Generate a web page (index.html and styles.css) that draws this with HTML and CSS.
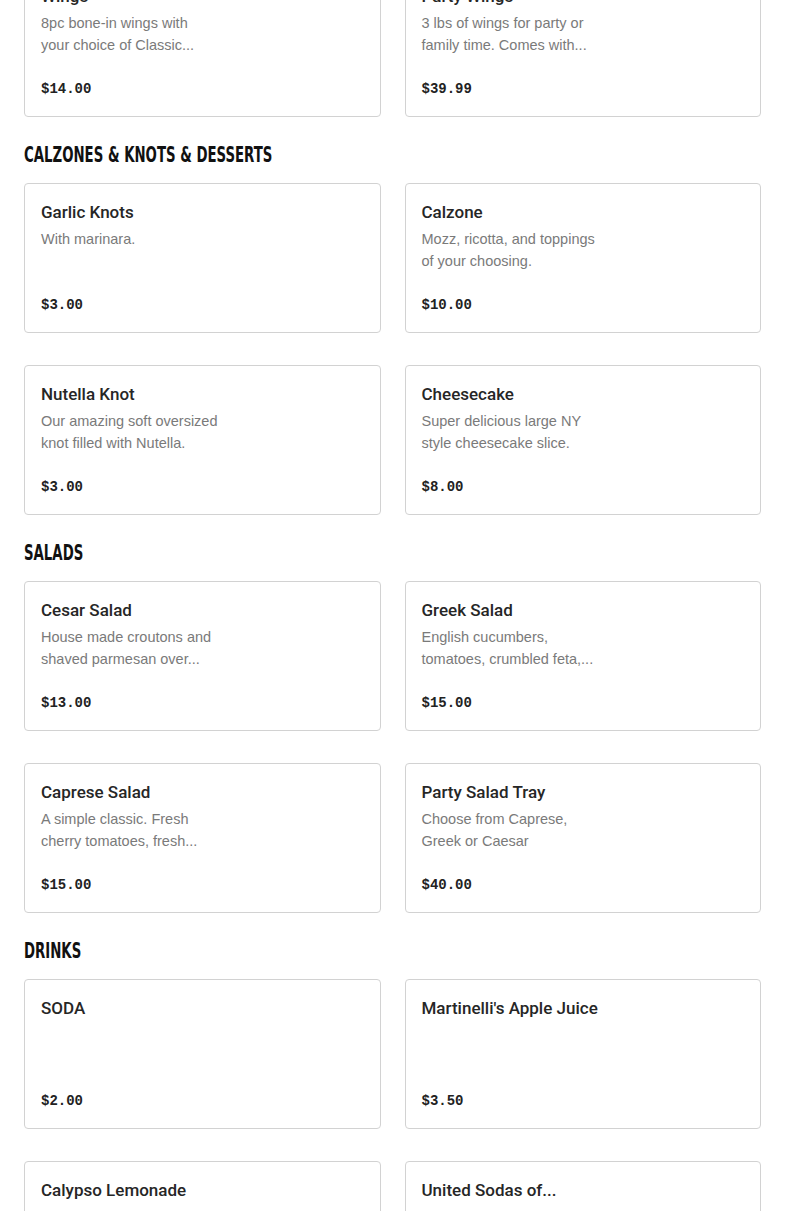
FILE: index.html
```html
<!DOCTYPE html>
<html>
<head>
<meta charset="utf-8">
<link rel="stylesheet" href="styles.css">
</head>
<body>
<main class="menu">
  <section class="section first">
    <div class="grid">
      <article class="card">
        <h3 class="item-title">Wings</h3>
        <p class="item-desc">8pc bone-in wings with<br>your choice of Classic...</p>
        <div class="price">$14.00</div>
      </article>
      <article class="card">
        <h3 class="item-title">Party Wings</h3>
        <p class="item-desc">3 lbs of wings for party or<br>family time. Comes with...</p>
        <div class="price">$39.99</div>
      </article>
    </div>
  </section>

  <section class="section">
    <h2 class="section-title"><span>CALZONES &amp; KNOTS &amp; DESSERTS</span></h2>
    <div class="grid">
      <article class="card">
        <h3 class="item-title">Garlic Knots</h3>
        <p class="item-desc">With marinara.</p>
        <div class="price">$3.00</div>
      </article>
      <article class="card">
        <h3 class="item-title">Calzone</h3>
        <p class="item-desc">Mozz, ricotta, and toppings<br>of your choosing.</p>
        <div class="price">$10.00</div>
      </article>
      <article class="card">
        <h3 class="item-title">Nutella Knot</h3>
        <p class="item-desc">Our amazing soft oversized<br>knot filled with Nutella.</p>
        <div class="price">$3.00</div>
      </article>
      <article class="card">
        <h3 class="item-title">Cheesecake</h3>
        <p class="item-desc">Super delicious large NY<br>style cheesecake slice.</p>
        <div class="price">$8.00</div>
      </article>
    </div>
  </section>

  <section class="section">
    <h2 class="section-title"><span>SALADS</span></h2>
    <div class="grid">
      <article class="card">
        <h3 class="item-title">Cesar Salad</h3>
        <p class="item-desc">House made croutons and<br>shaved parmesan over...</p>
        <div class="price">$13.00</div>
      </article>
      <article class="card">
        <h3 class="item-title">Greek Salad</h3>
        <p class="item-desc">English cucumbers,<br>tomatoes, crumbled feta,...</p>
        <div class="price">$15.00</div>
      </article>
      <article class="card">
        <h3 class="item-title">Caprese Salad</h3>
        <p class="item-desc">A simple classic. Fresh<br>cherry tomatoes, fresh...</p>
        <div class="price">$15.00</div>
      </article>
      <article class="card">
        <h3 class="item-title">Party Salad Tray</h3>
        <p class="item-desc">Choose from Caprese,<br>Greek or Caesar</p>
        <div class="price">$40.00</div>
      </article>
    </div>
  </section>

  <section class="section">
    <h2 class="section-title"><span>DRINKS</span></h2>
    <div class="grid">
      <article class="card">
        <h3 class="item-title">SODA</h3>
        <div class="price">$2.00</div>
      </article>
      <article class="card">
        <h3 class="item-title">Martinelli's Apple Juice</h3>
        <div class="price">$3.50</div>
      </article>
      <article class="card">
        <h3 class="item-title">Calypso Lemonade</h3>
        <div class="price">$3.00</div>
      </article>
      <article class="card">
        <h3 class="item-title">United Sodas of...</h3>
        <div class="price">$3.00</div>
      </article>
    </div>
  </section>
</main>
</body>
</html>
```

FILE: styles.css
```css
html, body {
  margin: 0;
  padding: 0;
  background: #ffffff;
}

body {
  font-family: "Liberation Sans", Arial, sans-serif;
  color: #222222;
}

.menu {
  padding: 0 24px;
  margin-top: -33px;
}

.section {
  margin-top: 25px;
}

.section.first {
  margin-top: 0;
}

.section-title {
  margin: 0 0 15px;
  height: 26px;
  line-height: 26px;
  font-family: "DejaVu Sans Condensed", "DejaVu Sans", sans-serif;
  font-stretch: condensed;
  font-weight: 700;
  font-size: 22px;
  color: #111111;
  white-space: nowrap;
}

.section-title span {
  display: inline-block;
  transform: scaleX(0.672);
  transform-origin: left center;
}

.grid {
  display: grid;
  grid-template-columns: 1fr 1fr;
  column-gap: 24px;
  row-gap: 32px;
}

.card {
  box-sizing: border-box;
  height: 150px;
  border: 1px solid #d2d2d2;
  border-radius: 4px;
  padding: 16px 16px 17px;
  display: flex;
  flex-direction: column;
}

.item-title {
  margin: 0;
  font-family: Roboto, "Liberation Sans", sans-serif;
  font-size: 17px;
  line-height: 24px;
  font-weight: 500;
  color: #262626;
}

.item-desc {
  margin: 4px 0 0;
  font-size: 14.5px;
  line-height: 22px;
  color: #7a7a7a;
}

.price {
  margin-top: auto;
  font-family: "Liberation Mono", "Courier New", monospace;
  font-size: 14px;
  line-height: 20px;
  font-weight: 700;
  color: #222222;
}
```
